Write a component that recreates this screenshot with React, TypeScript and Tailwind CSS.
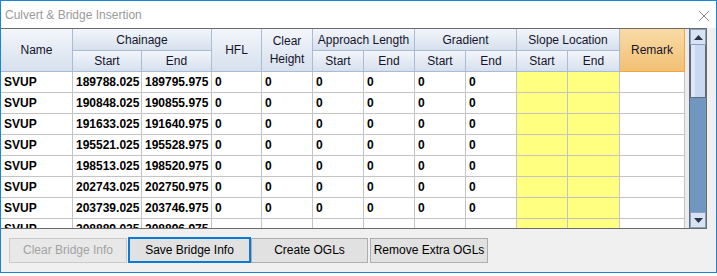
import React from "react";

// --- rows shown in the bridge grid ---
const rows = [
  { name: "SVUP", start: "189788.025", end: "189795.975" },
  { name: "SVUP", start: "190848.025", end: "190855.975" },
  { name: "SVUP", start: "191633.025", end: "191640.975" },
  { name: "SVUP", start: "195521.025", end: "195528.975" },
  { name: "SVUP", start: "198513.025", end: "198520.975" },
  { name: "SVUP", start: "202743.025", end: "202750.975" },
  { name: "SVUP", start: "203739.025", end: "203746.975" },
  { name: "SVUP", start: "208889.025", end: "208896.975" },
];

const widths = [72, 69, 70, 50, 51, 51, 51, 51, 51, 51, 52, 65];

const hd =
  "border-r border-b border-[#a9bcd3] bg-gradient-to-b from-[#f3f6fb] to-[#d6e0ed] text-[#14142b] font-normal text-center p-0";
const td = "border-r border-b border-[#c4c4c4] h-[21px] px-[3px] py-0 text-left font-bold text-black whitespace-nowrap overflow-hidden";

export default function App() {
  return (
    <div
      className="w-[717px] h-[273px] border border-[#1883d7] bg-[#f0f0f0] flex flex-col text-[12px] leading-none"
      style={{ fontFamily: "'Liberation Sans', Arial, sans-serif" }}
    >
      {/* title bar */}
      <div className="h-[27px] bg-white flex items-center justify-between pl-[4px] pr-[6px] shrink-0">
        <span className="text-[#9a9a9a] text-[12px]">Culvert &amp; Bridge Insertion</span>
        <svg width="12" height="12" viewBox="0 0 12 12" className="mt-[2px]">
          <path d="M1 1 L11 11 M11 1 L1 11" stroke="#8c8c8c" strokeWidth="1" />
        </svg>
      </div>

      {/* grid area */}
      <div className="h-[201px] w-[706px] border-t border-b border-r border-[#6b6b6b] flex shrink-0 bg-[#ececec]">
        <div className="w-[684px] h-full overflow-hidden bg-white">
          <table className="border-separate border-spacing-0 table-fixed w-[684px]">
            <colgroup>
              {widths.map((w, i) => (
                <col key={i} style={{ width: w }} />
              ))}
            </colgroup>
            <thead>
              <tr className="h-[22px]">
                <th rowSpan={2} className={`${hd} font-bold`}>Name</th>
                <th colSpan={2} className={hd}>Chainage</th>
                <th rowSpan={2} className={hd}>HFL</th>
                <th rowSpan={2} className={`${hd} leading-[18px]`}>
                  Clear
                  <br />
                  Height
                </th>
                <th colSpan={2} className={hd}>Approach Length</th>
                <th colSpan={2} className={hd}>Gradient</th>
                <th colSpan={2} className={hd}>Slope Location</th>
                <th
                  rowSpan={2}
                  className="border-r border-b border-[#f2a540] bg-gradient-to-b from-[#f9dba6] to-[#f1c072] text-[#14142b] font-normal text-center p-0"
                >
                  Remark
                </th>
              </tr>
              <tr className="h-[21px]">
                <th className={hd}>Start</th>
                <th className={hd}>End</th>
                <th className={hd}>Start</th>
                <th className={hd}>End</th>
                <th className={hd}>Start</th>
                <th className={hd}>End</th>
                <th className={hd}>Start</th>
                <th className={hd}>End</th>
              </tr>
            </thead>
            <tbody>
              {rows.map((r, i) => (
                <tr key={i}>
                  <td className={td}>{r.name}</td>
                  <td className={td}>{r.start}</td>
                  <td className={td}>{r.end}</td>
                  <td className={td}>{i < 7 ? "0" : ""}</td>
                  <td className={td}>{i < 7 ? "0" : ""}</td>
                  <td className={td}>{i < 7 ? "0" : ""}</td>
                  <td className={td}>{i < 7 ? "0" : ""}</td>
                  <td className={td}>{i < 7 ? "0" : ""}</td>
                  <td className={td}>{i < 7 ? "0" : ""}</td>
                  <td className={`${td} bg-[#ffff80]`}></td>
                  <td className={`${td} bg-[#ffff80]`}></td>
                  <td className={td}></td>
                </tr>
              ))}
            </tbody>
          </table>
        </div>

        {/* scrollbar */}
        <div className="ml-[4px] w-[17px] h-full border-l border-[#5f6b80] flex flex-col bg-[#7196bf]">
          <div className="h-[16px] bg-[#d7e3f4] border border-[#8aa0bd] flex items-center justify-center shrink-0">
            <svg width="9" height="5" viewBox="0 0 9 5">
              <path d="M0 5 L4.5 0 L9 5 Z" fill="#2c3446" />
            </svg>
          </div>
          <div className="h-[53px] bg-[#c8d9f1] border border-[#5f6b80] border-t-0 shrink-0 flex">
            <div className="w-[4px] h-full bg-[#dce7f7]" />
          </div>
          <div className="flex-1" />
          <div className="h-[16px] bg-[#d7e3f4] border border-[#8aa0bd] flex items-center justify-center shrink-0">
            <svg width="9" height="5" viewBox="0 0 9 5">
              <path d="M0 0 L4.5 5 L9 0 Z" fill="#2c3446" />
            </svg>
          </div>
        </div>
      </div>

      {/* buttons */}
      <div className="flex items-center pl-[8px] pt-[8px] text-[12px]">
        <button className="w-[118px] h-[25px] bg-[#e8e8e8] border border-[#cbcbcb] text-[#a3a3a3]">
          Clear Bridge Info
        </button>
        <button className="ml-[1px] w-[123px] h-[26px] bg-[#e1e1e1] border-2 border-[#0a7bd4] text-black">
          Save Bridge Info
        </button>
        <button className="w-[117px] h-[25px] bg-[#e1e1e1] border border-[#adadad] text-black">
          Create OGLs
        </button>
        <button className="ml-[2px] w-[118px] h-[25px] bg-[#e1e1e1] border border-[#adadad] text-black">
          Remove Extra OGLs
        </button>
      </div>
    </div>
  );
}
